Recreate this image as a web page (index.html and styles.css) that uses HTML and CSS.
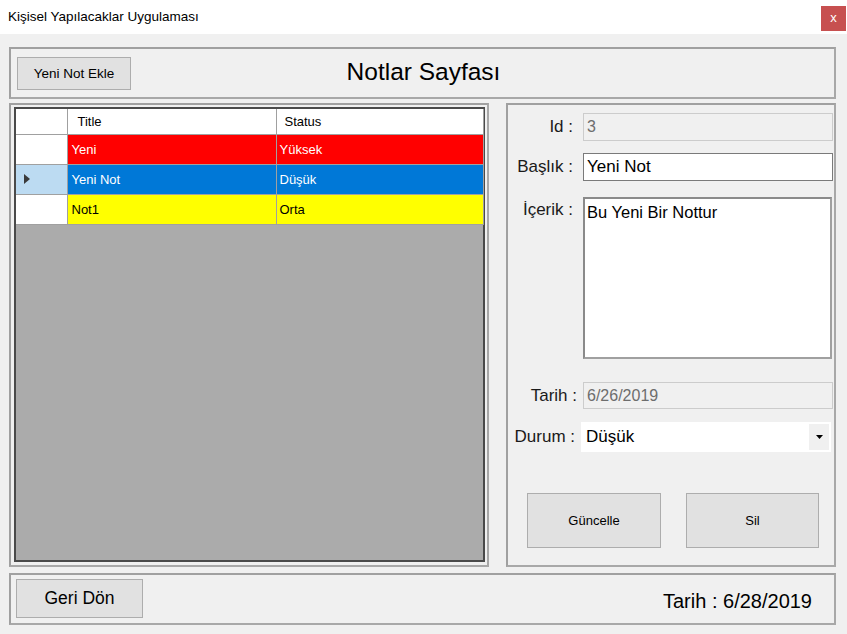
FILE: index.html
```html
<!DOCTYPE html>
<html lang="tr">
<head>
<meta charset="utf-8">
<title>Kişisel Yapılacaklar Uygulaması</title>
<link rel="stylesheet" href="styles.css">
</head>
<body>
<div class="window">
  <div class="titlebar">
    <span class="title-text">Kişisel Yapılacaklar Uygulaması</span>
    <span class="close">x</span>
  </div>
  <div class="client">
    <div class="panel top-panel">
      <div class="top-left"><button class="btn btn-add">Yeni Not Ekle</button></div>
      <h1 class="heading">Notlar Sayfası</h1>
      <div></div>
    </div>
    <div class="middle">
      <div class="panel left-panel">
        <div class="grid">
          <table class="grid-table">
            <colgroup><col class="c-rh"><col class="c-title"><col class="c-status"></colgroup>
            <thead>
              <tr><th class="rh"></th><th class="h-title">Title</th><th class="h-status">Status</th></tr>
            </thead>
            <tbody>
              <tr class="r-red"><td class="rh"></td><td>Yeni</td><td>Yüksek</td></tr>
              <tr class="r-blue"><td class="rh rh-sel"><svg class="arrow" width="6" height="10" viewBox="0 0 6 10"><path d="M0 0 L6 5 L0 10 Z" fill="#3a3a3a"/></svg></td><td>Yeni Not</td><td>Düşük</td></tr>
              <tr class="r-yellow"><td class="rh"></td><td>Not1</td><td>Orta</td></tr>
            </tbody>
          </table>
        </div>
      </div>
      <div class="panel right-panel">
        <div class="row row-id">
          <label class="lbl">Id :</label>
          <div class="field disabled">3</div>
        </div>
        <div class="row row-baslik">
          <label class="lbl">Başlık :</label>
          <div class="field text">Yeni Not</div>
        </div>
        <div class="row row-icerik">
          <label class="lbl lbl-top">İçerik :</label>
          <div class="field area">Bu Yeni Bir Nottur</div>
        </div>
        <div class="row row-tarih">
          <label class="lbl">Tarih :</label>
          <div class="field disabled">6/26/2019</div>
        </div>
        <div class="row row-durum">
          <label class="lbl">Durum :</label>
          <div class="combo"><span class="combo-text">Düşük</span><span class="combo-btn"><svg width="7" height="4" viewBox="0 0 7 4"><path d="M0 0 L7 0 L3.5 4 Z" fill="#000"/></svg></span></div>
        </div>
        <div class="actions">
          <button class="btn btn-big">Güncelle</button>
          <button class="btn btn-big">Sil</button>
        </div>
      </div>
    </div>
    <div class="panel bottom-panel">
      <button class="btn btn-back">Geri Dön</button>
      <span class="date">Tarih : 6/28/2019</span>
    </div>
  </div>
</div>
</body>
</html>
```

FILE: styles.css
```css
* { box-sizing: border-box; }
html, body { margin: 0; padding: 0; }
body {
  width: 847px;
  height: 634px;
  overflow: hidden;
  font-family: "Liberation Sans", Arial, sans-serif;
  color: #000;
  background: #f0f0f0;
}
.window { width: 847px; height: 634px; display: flex; flex-direction: column; }
.titlebar {
  height: 34px;
  background: #fff;
  display: flex;
  align-items: flex-start;
  justify-content: space-between;
}
.title-text { font-size: 13.5px; margin: 9px 0 0 8px; }
.close {
  width: 25px; height: 25px;
  margin: 6px 1px 0 0;
  background: #c75050;
  color: #fff;
  font-size: 13px;
  display: flex; align-items: center; justify-content: center;
  line-height: 1;
  padding-bottom: 2px;
}
.client {
  flex: 1;
  background: #f0f0f0;
  padding: 13px 11px 0 9px;
  display: flex;
  flex-direction: column;
}
.panel {
  border: 2px solid #a0a0a0;
  border-right-color: #a8a8a8;
  border-bottom-color: #a8a8a8;
}
.btn {
  font-family: "Liberation Sans", Arial, sans-serif;
  background: #e1e1e1;
  border: 1px solid #adadad;
  color: #000;
  padding: 0;
  margin: 0;
}
.top-panel {
  height: 52px;
  display: grid;
  grid-template-columns: 1fr auto 1fr;
  align-items: center;
  padding-left: 6px;
}
.btn-add { width: 114px; height: 33px; font-size: 13.5px; margin-top: 1px; }
.heading { margin: 0 4px 0 0; font-weight: normal; font-size: 24.5px; line-height: 1; padding-bottom: 1px; }
.middle {
  display: flex;
  gap: 17px;
  margin-top: 4px;
  height: 464px;
}
.left-panel {
  width: 480px;
  padding: 2px 2px 3px 3px;
}
.grid {
  width: 471px;
  height: 455px;
  border: 2px solid #4a4a4a;
  background: #ababab;
}
.grid-table {
  border-collapse: collapse;
  table-layout: fixed;
  width: 467px;
  font-size: 13px;
}
.c-rh { width: 51px; }
.c-title { width: 209px; }
.c-status { width: 207px; }
.grid-table th, .grid-table td {
  border-right: 1px solid #a0a0a0;
  border-bottom: 1px solid #a0a0a0;
  padding: 0;
  text-align: left;
  font-weight: normal;
  white-space: nowrap;
}
.grid-table thead th { height: 25px; background: #fff; }
.h-title { padding-left: 10px !important; }
.h-status { padding-left: 8px !important; }
.grid-table tbody td { height: 30px; padding-left: 4px; }
.grid-table tbody td:nth-child(3) { padding-left: 3px; }
.grid-table .rh { background: #fff; padding-left: 0; }
.grid-table .rh-sel { background: #bcdbf2; padding-left: 8px; }
.arrow { display: block; }
.r-red td { background: #ff0000; color: #fff; }
.r-blue td { background: #0078d7; color: #fff; }
.r-yellow td { background: #ffff00; color: #000; }
.right-panel {
  width: 330px;
  padding: 8px 1px 0 0;
  display: flex;
  flex-direction: column;
}
.row { display: flex; align-items: center; }
.lbl {
  width: 69px;
  text-align: right;
  padding-right: 4px;
  font-size: 17px;
  color: #1a1a1a;
  flex-shrink: 0;
  white-space: nowrap;
}
.field {
  margin-left: 6px;
  width: 250px;
  font-size: 16px;
  padding-left: 3px;
  display: flex;
  align-items: center;
}
.disabled {
  height: 28px;
  background: #f0f0f0;
  border: 1px solid #cccccc;
  color: #6d6d6d;
}
.text {
  height: 28px;
  background: #fff;
  border: 1px solid #7a7a7a;
  font-size: 17px;
}
.row-baslik { margin-top: 12px; }
.row-icerik { margin-top: 16px; align-items: flex-start; }
.lbl-top { padding-top: 3px; }
.area {
  width: 249px;
  height: 162px;
  background: #fff;
  border: 2px solid #8a8a8a;
  border-right-color: #a0a0a0;
  border-bottom-color: #a0a0a0;
  align-items: flex-start;
  padding-top: 4px;
  padding-left: 2px;
  font-size: 16.5px;
}
.row-tarih { margin-top: 23px; }
.row-tarih .disabled { height: 27px; }
.row-tarih .lbl { width: 71px; padding-right: 2px; }
.row-tarih .field { margin-left: 4px; }
.row-durum { margin-top: 13px; }
.row-durum .lbl { width: 69px; padding-right: 2px; }
.combo {
  margin-left: 4px;
  width: 250px;
  height: 30px;
  background: #fff;
  display: flex;
  align-items: center;
  justify-content: space-between;
  padding: 2px 2px 2px 5px;
}
.combo-text { font-size: 17px; }
.combo-btn {
  width: 20px;
  height: 26px;
  background: #f0f0f0;
  display: flex; align-items: center; justify-content: center;
}
.actions {
  display: flex;
  gap: 25px;
  margin-top: 41px;
  padding-left: 19px;
}
.btn-big { width: 134px; height: 55px; font-size: 13px; }
.btn-big + .btn-big { width: 133px; }
.bottom-panel {
  margin-top: 6px;
  height: 52px;
  display: flex;
  align-items: flex-start;
  justify-content: space-between;
  padding: 4px 22px 0 5px;
}
.btn-back { width: 127px; height: 39px; font-size: 17.5px; }
.date { font-size: 20px; margin-top: 11px; }
```
